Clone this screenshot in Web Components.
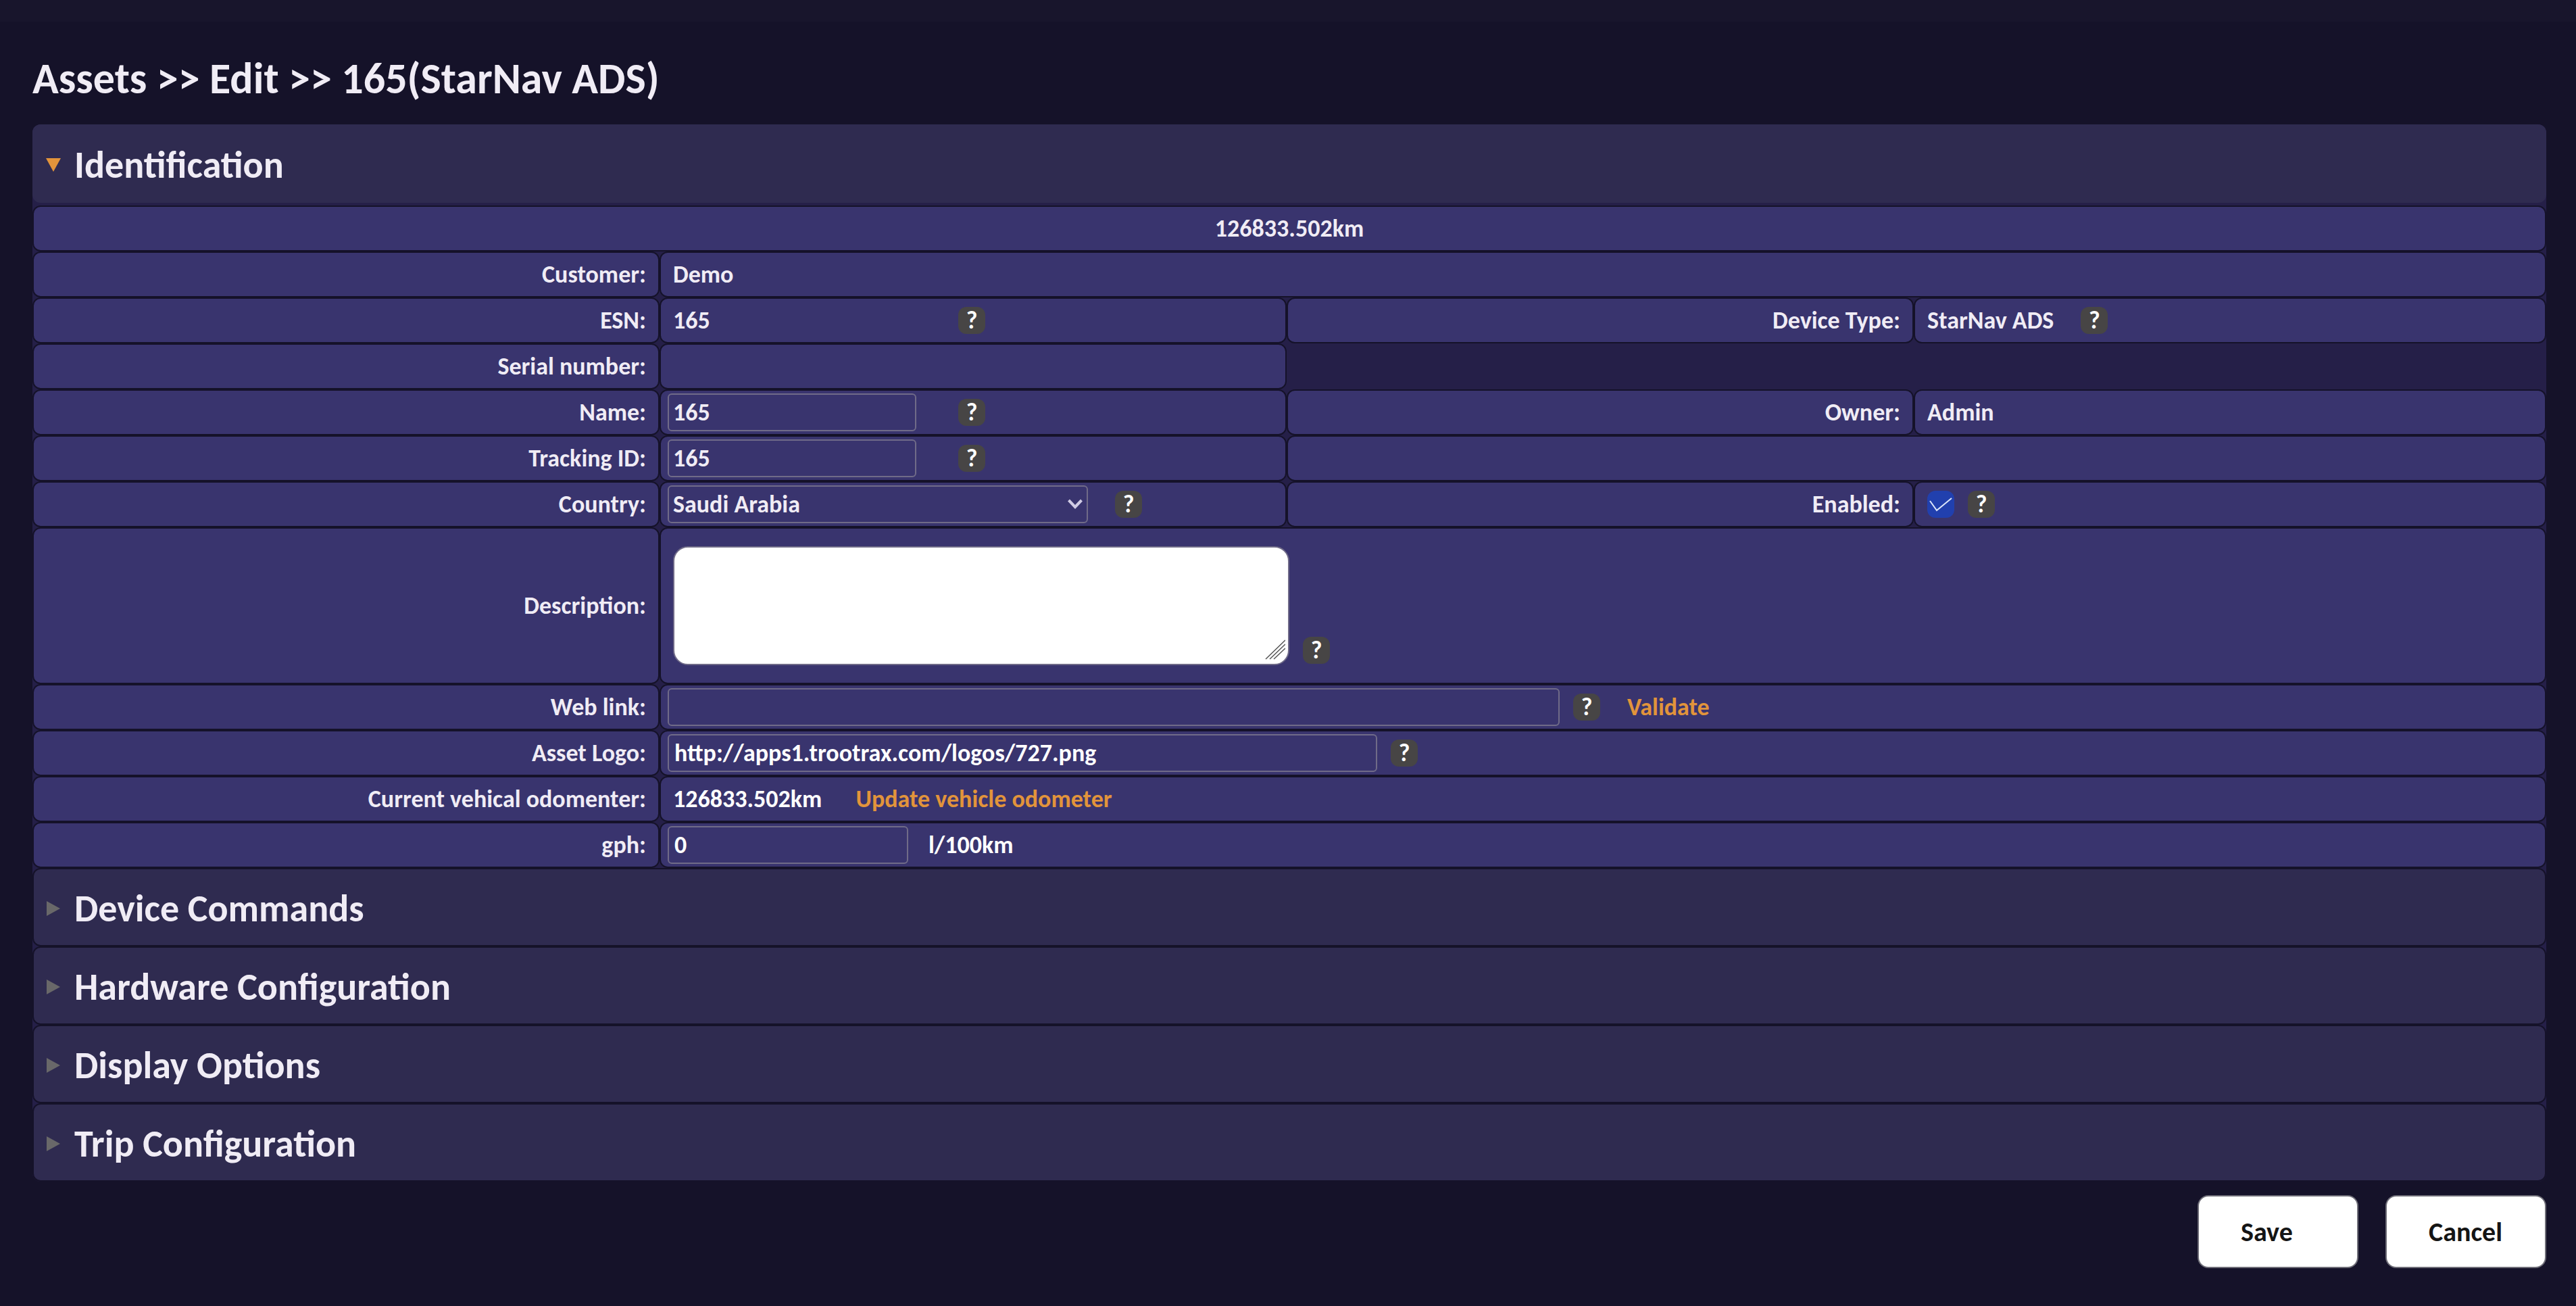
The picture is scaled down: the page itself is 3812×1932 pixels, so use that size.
<!DOCTYPE html>
<html lang="en">
<head>
<meta charset="utf-8">
<title>Assets &gt;&gt; Edit</title>
<style>
  html { --bg: #151229; --strip: #18152c; --panel: #251f48; --header: #2f2b50; --cell: #39346e;
    --text: #f0ecf5; --bright: #ffffff; --accent: #e2943b; --line: #706b88; background: var(--bg); }
  body { margin: 0; font: 700 36px/44px Carlito, Calibri, Lato, sans-serif; color: var(--text); }
</style>
</head>
<body>
<asset-page></asset-page>

<template id="page">
  <style>
    :host { display: block; border-top: 32px solid var(--strip); }
    main { padding: 44px 44px 52px 48px; }
    h1 { margin: 0 0 28px; font-size: 64px; line-height: 80px; }
    .panel { background: var(--panel); border-radius: 12px; }
    footer { display: flex; justify-content: flex-end; gap: 40px; margin-top: 20px; }
  </style>
  <main>
    <h1>Assets &gt;&gt; Edit &gt;&gt; 165(StarNav ADS)</h1>
    <div class="panel">
      <section-panel open heading="Identification"><identification-form></identification-form></section-panel>
      <section-panel heading="Device Commands"></section-panel>
      <section-panel heading="Hardware Configuration"></section-panel>
      <section-panel heading="Display Options"></section-panel>
      <section-panel heading="Trip Configuration"></section-panel>
    </div>
    <footer>
      <action-button>Save</action-button>
      <action-button>Cancel</action-button>
    </footer>
  </main>
</template>

<template id="section">
  <style>
    :host { display: block; }
    h2 { margin: 0; font-size: 56px; line-height: 68px; }
    button { display: flex; align-items: center; gap: 20px; box-sizing: border-box; width: 100%; height: 116px;
      margin: 0; padding: 4px 18px 0; font: inherit; color: inherit; text-align: left; cursor: pointer;
      background: var(--header); border: 2px solid var(--bg); border-radius: 12px; }
    svg { flex: none; width: 22px; height: 22px; fill: #696869; }
    .shut, .open { display: block; }
    .open { display: none; }
    :host([open]) button { border-color: var(--header); }
    :host([open]) svg { fill: var(--accent); }
    :host([open]) .open { display: block; }
    :host([open]) .shut, :host(:not([open])) slot { display: none; }
    :host([open]) .body { padding-top: 4px; }
  </style>
  <h2><button type="button">
    <svg viewBox="0 0 22 22" aria-hidden="true"><path class="shut" d="M1 0L21 11L1 22z"/><path class="open" d="M0 1H22L11 21z"/></svg>
    <span></span>
  </button></h2>
  <div class="body"><slot></slot></div>
</template>

<template id="cell">
  <style>
    :host { display: flex; align-items: center; gap: 20px; box-sizing: border-box; min-height: 68px;
      padding: 0 10px; background: var(--cell); border: 2px solid var(--bg); border-radius: 12px; }
    :host([kind="label"]) { justify-content: flex-end; padding-right: 18px; }
    :host([kind="center"]) { justify-content: center; }
    :host([kind="wide"]) { grid-column: span 3; }
    :host([kind="pair"]) { grid-column: span 2; }
    :host([kind="center"]) { grid-column: 1 / -1; }
  </style>
  <slot></slot>
</template>

<template id="help">
  <style>
    :host { display: block; flex: none; }
    button { display: block; width: 40px; height: 40px; padding: 0; border: 0; border-radius: 12px;
      background: #474545; color: #fff; font: inherit; line-height: 40px; text-align: center; cursor: pointer; }
  </style>
  <button type="button" aria-label="Help">?</button>
</template>

<template id="action">
  <style>
    :host { display: block; }
    button { display: block; box-sizing: border-box; min-width: 238px; height: 108px; padding: 2px 62px 0; text-align: left;
      font: inherit; font-size: 40px; color: #151515; background: #fff; border: 2px solid #6f6e78; border-radius: 16px; cursor: pointer; }
  </style>
  <button type="button"><slot></slot></button>
</template>

<template id="form">
  <style>
    :host { display: block; }
    form { display: grid; grid-template-columns: 928fr 928fr 928fr 936fr; margin: 0; }
    input, select, textarea { box-sizing: border-box; margin: 0; font: inherit; color: inherit; background: none; border: 2px solid var(--line); }
    input, select { height: 56px; padding: 0 6px; border-radius: 6px; }
    .lead { box-sizing: border-box; width: 430px; margin-right: -20px; }
    .short { width: 368px; display: block; }
    .number { width: 356px; padding: 0 8px; }
    .link { width: 1320px; }
    .logo { width: 1050px; padding: 0 8px; }
    .text { padding-left: 8px; }
    .bright { color: var(--bright); }
    .far { margin-left: 20px; }
    .unit { margin-left: 10px; }
    .update { margin-left: 30px; }
    a { color: var(--accent); text-decoration: none; }
    .pick, .tick, .area { position: relative; display: block; }
    .pick select { display: block; width: 622px; padding: 0 6px; appearance: none; }
    .pick svg, .tick svg, .area svg { position: absolute; pointer-events: none; fill: none; }
    .pick svg { right: 8px; top: 20px; width: 22px; height: 16px; stroke: #d0cbe4; stroke-width: 4; }
    .tick, .area { margin-left: 8px; }
    .tick input { display: block; width: 40px; height: 40px; appearance: none; background: #2140ae; border: 0; border-radius: 12px; }
    .tick svg { left: 0; top: 0; width: 40px; height: 40px; stroke: #dbe6fa; stroke-width: 2; }
    .area { margin-top: 26px; margin-bottom: 26px; }
    textarea { display: block; width: 912px; height: 176px; padding: 12px; color: #151515; background: #fff; border-radius: 22px; resize: none; }
    .area svg { right: 6px; bottom: 8px; width: 30px; height: 30px; stroke: #555; stroke-width: 1.500; }
    .low { align-self: flex-end; margin-bottom: 28px; }
  </style>
  <form>
    <form-cell kind="center"><span>126833.502km</span></form-cell>

    <form-cell kind="label"><span>Customer:</span></form-cell>
    <form-cell kind="wide"><span class="text">Demo</span></form-cell>

    <form-cell kind="label"><span>ESN:</span></form-cell>
    <form-cell><span class="lead text">165</span><help-button></help-button></form-cell>
    <form-cell kind="label"><span>Device Type:</span></form-cell>
    <form-cell><span class="text">StarNav ADS</span><help-button class="far"></help-button></form-cell>

    <form-cell kind="label"><span>Serial number:</span></form-cell>
    <form-cell></form-cell>
    <div></div><div></div>

    <form-cell kind="label"><label for="name">Name:</label></form-cell>
    <form-cell><span class="lead"><input id="name" class="short" type="text" value="165"></span><help-button></help-button></form-cell>
    <form-cell kind="label"><span>Owner:</span></form-cell>
    <form-cell><span class="text">Admin</span></form-cell>

    <form-cell kind="label"><label for="tracking">Tracking ID:</label></form-cell>
    <form-cell><span class="lead"><input id="tracking" class="short" type="text" value="165"></span><help-button></help-button></form-cell>
    <form-cell kind="pair"></form-cell>

    <form-cell kind="label"><label for="country">Country:</label></form-cell>
    <form-cell><span class="pick"><select id="country"><option>Saudi Arabia</option></select><svg viewBox="0 0 22 16" aria-hidden="true"><path d="M1.500 2L11 12L20.500 2"/></svg></span><help-button class="far"></help-button></form-cell>
    <form-cell kind="label"><label for="enabled">Enabled:</label></form-cell>
    <form-cell><span class="tick"><input id="enabled" type="checkbox" checked><svg viewBox="0 0 40 40" aria-hidden="true"><path d="M4 15L14 29L36 11"/></svg></span><help-button></help-button></form-cell>

    <form-cell kind="label"><label for="description">Description:</label></form-cell>
    <form-cell kind="wide"><span class="area"><textarea id="description"></textarea><svg viewBox="0 0 30 30" aria-hidden="true"><path d="M1 29L30 1M7 29L30 7M13 29L30 13"/></svg></span><help-button class="low"></help-button></form-cell>

    <form-cell kind="label"><label for="web">Web link:</label></form-cell>
    <form-cell kind="wide"><input id="web" class="link" type="text"><help-button></help-button><a class="far" href="#validate">Validate</a></form-cell>

    <form-cell kind="label"><label for="logo">Asset Logo:</label></form-cell>
    <form-cell kind="wide"><input id="logo" class="logo bright" type="text" value="http://apps1.trootrax.com/logos/727.png"><help-button></help-button></form-cell>

    <form-cell kind="label"><span>Current vehical odomenter:</span></form-cell>
    <form-cell kind="wide"><span class="text bright">126833.502km</span><a class="update" href="#odometer">Update vehicle odometer</a></form-cell>

    <form-cell kind="label"><label for="gph">gph:</label></form-cell>
    <form-cell kind="wide"><input id="gph" class="number bright" type="text" value="0"><span class="unit bright">l/100km</span></form-cell>
  </form>
</template>

<script>
  class TemplateElement extends HTMLElement {
    constructor() {
      super();
      const template = document.getElementById(this.constructor.template);
      this.attachShadow({ mode: 'open' }).append(template.content.cloneNode(true));
    }
  }
  class HelpButton extends TemplateElement { static template = 'help'; }
  class ActionButton extends TemplateElement { static template = 'action'; }
  class FormCell extends TemplateElement { static template = 'cell'; }
  class IdentificationForm extends TemplateElement { static template = 'form'; }
  class SectionPanel extends TemplateElement {
    static template = 'section';
    connectedCallback() {
      const button = this.shadowRoot.querySelector('button');
      this.shadowRoot.querySelector('span').textContent = this.getAttribute('heading');
      button.setAttribute('aria-expanded', this.hasAttribute('open'));
      button.onclick = () => button.setAttribute('aria-expanded', this.toggleAttribute('open'));
    }
  }
  class AssetPage extends TemplateElement { static template = 'page'; }
  customElements.define('help-button', HelpButton);
  customElements.define('action-button', ActionButton);
  customElements.define('form-cell', FormCell);
  customElements.define('identification-form', IdentificationForm);
  customElements.define('section-panel', SectionPanel);
  customElements.define('asset-page', AssetPage);
</script>
</body>
</html>
